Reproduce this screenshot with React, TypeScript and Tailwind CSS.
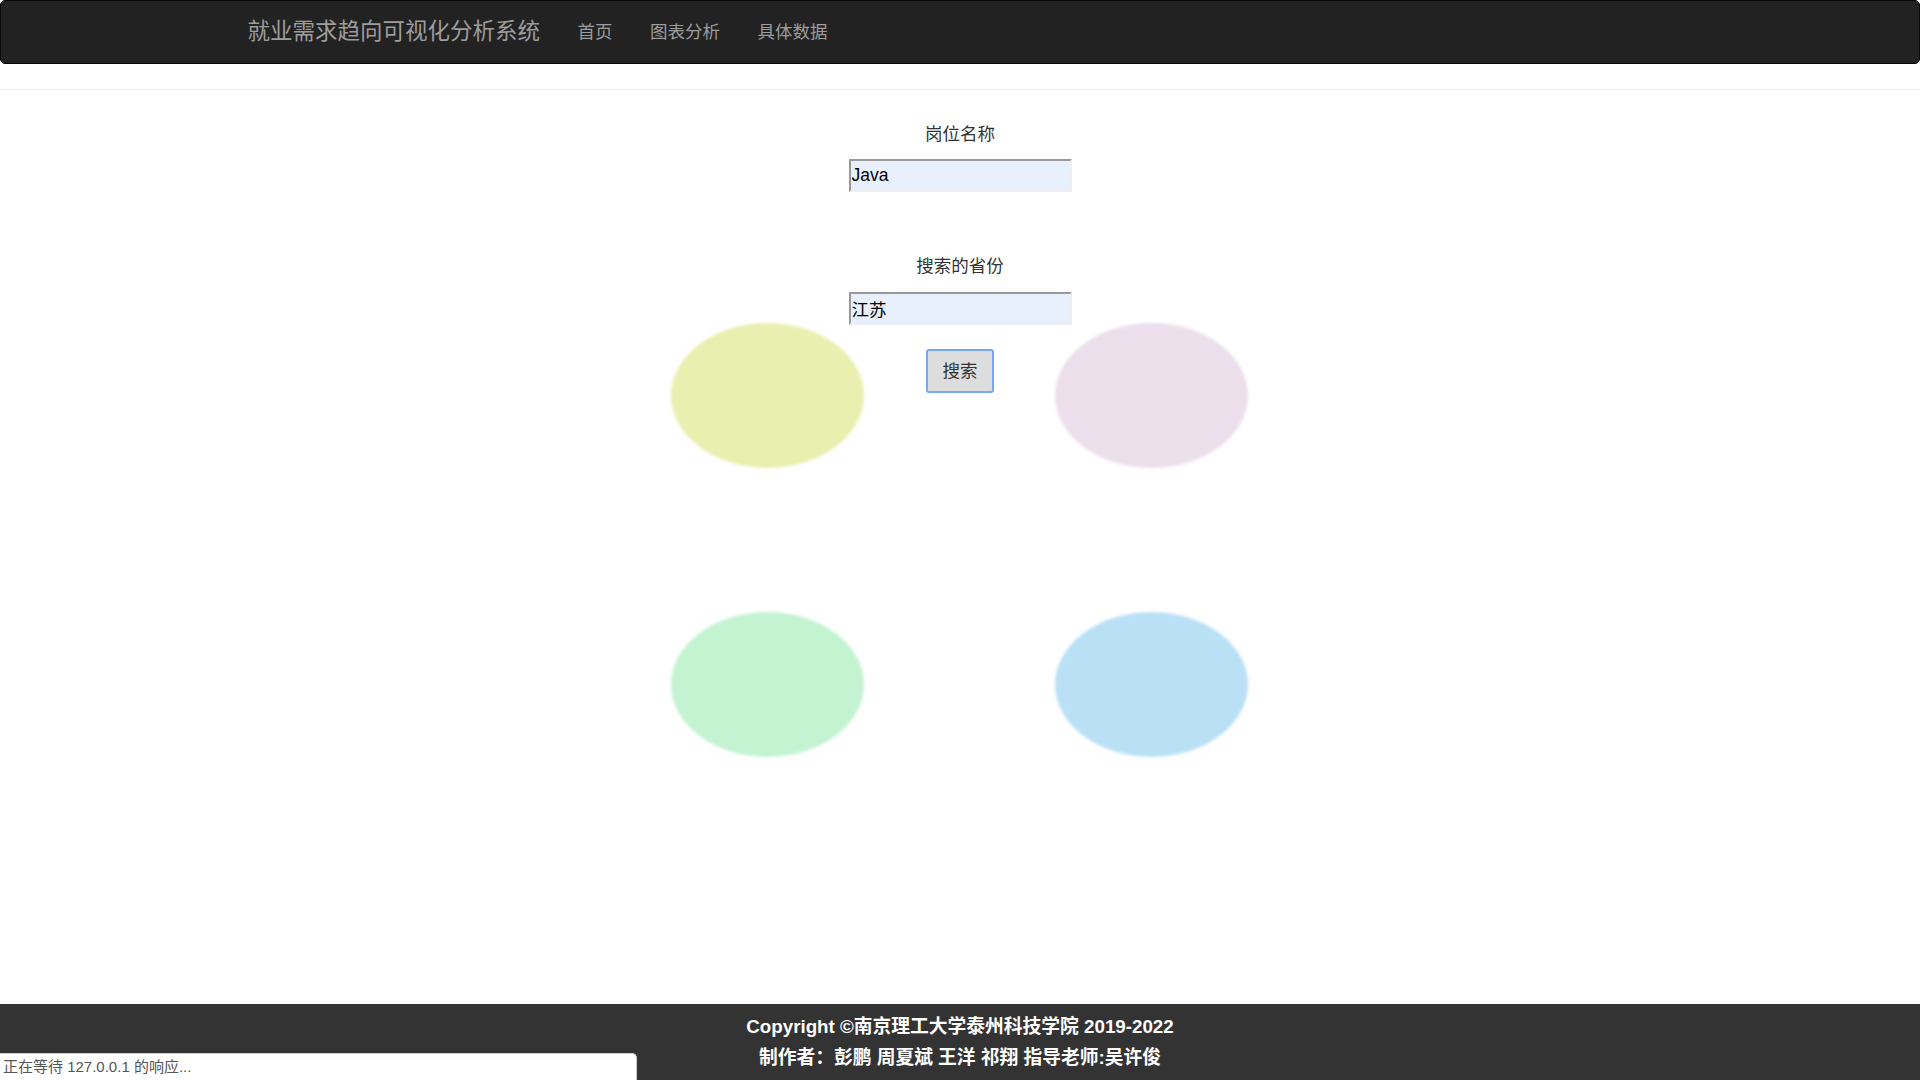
import React from 'react';

const bubbles = [
    { id: 'yellow', className: 'left-[671px] top-[323px] bg-[#e9efaf]' },
    { id: 'pink', className: 'left-[1055px] top-[323px] bg-[#ebdfeb]' },
    { id: 'green', className: 'left-[671px] top-[612px] bg-[#c3f3d1]' },
    { id: 'blue', className: 'left-[1055px] top-[612px] bg-[#bae0f6]' },
];

const navItems = ['首页', '图表分析', '具体数据'];

export default function App() {
    return (
        <div
            className="relative min-h-screen flex flex-col bg-white text-[#333] overflow-hidden"
            style={{ fontFamily: '"Liberation Sans", "Noto Sans CJK SC", sans-serif' }}
        >
            {/* 装饰气泡 */}
            {bubbles.map((b) => (
                <div
                    key={b.id}
                    className={`absolute w-[193px] h-[145px] rounded-[50%] blur-[1.5px] ${b.className}`}
                />
            ))}

            {/* 导航栏 */}
            <nav className="relative h-[64px] bg-[#222] border border-[#080808] rounded-[5px] mb-[25px]">
                <div className="w-[1462.5px] mx-auto px-[18.75px] h-full flex items-center text-[#9d9d9d]">
                    <span className="text-[22.5px] leading-none pr-[18.75px] pt-[1px]">就业需求趋向可视化分析系统</span>
                    <ul className="flex items-center pt-[1px]">
                        {navItems.map((item) => (
                            <li key={item} className="px-[18.75px] text-[17.5px] leading-none">
                                {item}
                            </li>
                        ))}
                    </ul>
                </div>
            </nav>
            <div className="border-t border-[#eee]" />

            {/* 搜索表单 */}
            <main className="relative flex-1 flex flex-col items-center pt-[32px]">
                <label className="text-[17.5px] leading-[25px]">岗位名称</label>
                <input
                    readOnly
                    value="Java"
                    className="mt-[12px] w-[223px] h-[33px] px-[1px] bg-[#e8f0fe] text-black text-[17.5px] border-[2.5px] border-t-[#999] border-l-[#999] border-b-[#eee] border-r-[#eee] outline-none"
                />
                <label className="mt-[62px] text-[17.5px] leading-[25px]">搜索的省份</label>
                <input
                    readOnly
                    value="江苏"
                    className="mt-[13px] w-[223px] h-[33px] px-[1px] bg-[#e8f0fe] text-black text-[17.5px] border-[2.5px] border-t-[#999] border-l-[#999] border-b-[#eee] border-r-[#eee] outline-none"
                />
                <button className="mt-[24px] w-[68px] h-[44px] bg-[#ddd] border-2 border-[#7aa7f5] rounded-[3px] text-[17.5px] text-[#333]">
                    搜索
                </button>
            </main>

            {/* 页脚 */}
            <footer className="relative h-[76px] bg-[#333] text-white text-center text-[18.75px] font-bold leading-[31px] pt-[7px]">
                <p>Copyright ©南京理工大学泰州科技学院 2019-2022</p>
                <p>制作者：彭鹏 周夏斌 王洋 祁翔 指导老师:吴许俊</p>
            </footer>

            {/* 浏览器状态栏 */}
            <div className="absolute left-0 bottom-0 w-[637px] h-[27px] bg-white border-t border-r border-[#ccc] rounded-tr-[5px] pl-[3px] text-[15px] leading-[26px] text-[#555]">
                正在等待 127.0.0.1 的响应...
            </div>
        </div>
    );
}
